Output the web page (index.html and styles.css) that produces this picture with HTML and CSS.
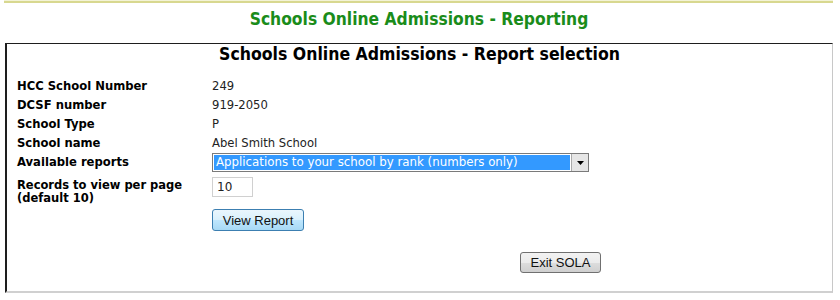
FILE: index.html
```html
<!DOCTYPE html>
<html lang="en">

<head>
    <meta charset="UTF-8">
    <link rel="stylesheet" href="styles.css">
</head>

<body>
    <div class="topline"></div>
    <h1 class="site-title">Schools Online Admissions - Reporting</h1>

    <div class="panel">
        <h2 class="panel-title">Schools Online Admissions - Report selection</h2>

        <form class="report-form">
            <div class="label">HCC School Number</div>
            <div class="value">249</div>

            <div class="label">DCSF number</div>
            <div class="value">919-2050</div>

            <div class="label">School Type</div>
            <div class="value">P</div>

            <div class="label">School name</div>
            <div class="value">Abel Smith School</div>

            <div class="label">Available reports</div>
            <div class="value">
                <div class="select">
                    <span class="select-text">Applications to your school by rank (numbers only)</span>
                    <span class="select-arrow">
                        <svg width="7" height="4" viewBox="0 0 7 4"><path d="M0 0h7L3.5 4z" fill="#000"/></svg>
                    </span>
                </div>
            </div>

            <div class="label tall">Records to view per page<br>(default 10)</div>
            <div class="value"><input class="per-page" type="text" value="10"></div>

            <div class="label"></div>
            <div class="value"><button type="button" class="btn btn-default">View Report</button></div>
        </form>

        <div class="exit-row">
            <button type="button" class="btn">Exit SOLA</button>
        </div>
    </div>
</body>

</html>
```

FILE: styles.css
```css
html {
    background-color: #fff;
}

body {
    margin: 0;
    padding: 0 7px 0 5px;
    font-family: "DejaVu Sans", Verdana, sans-serif;
    color: #000;
}

.topline {
    height: 2px;
    margin: 0 0 0 -1px;
    background-color: #d8d890;
    border-top: 1px solid #f3f3d6;
}

.site-title {
    margin: 6px 0 0;
    height: 34px;
    text-align: center;
    font-family: "DejaVu Sans Condensed", "DejaVu Sans", sans-serif;
    font-size: 17.3px;
    font-weight: bold;
    color: #1a8c1a;
}

.panel {
    height: 247px;
    border-top: 1px solid #1e1e1e;
    border-left: 2px solid #1e1e1e;
    border-right: 1px solid #c8c8c8;
    border-bottom: 2px solid #d0d0d0;
}

.panel-title {
    margin: 0;
    text-align: center;
    font-family: "DejaVu Sans Condensed", "DejaVu Sans", sans-serif;
    font-size: 17.5px;
    font-weight: bold;
    line-height: 20px;
}

.report-form {
    margin: 13px 0 0 10px;
    display: grid;
    grid-template-columns: 195px 1fr;
    font-size: 11.6px;
    line-height: 19px;
}

.label {
    font-weight: bold;
}

.label.tall {
    font-size: 11.5px;
    line-height: 13px;
    padding-top: 7px;
}

.value {
    color: #222;
}

.select {
    display: flex;
    align-items: center;
    width: 377px;
    height: 19px;
    border: 1px solid #7a7a7a;
    background-color: #fff;
    box-sizing: border-box;
}

.select-text {
    flex: 1;
    margin: 1px;
    height: 15px;
    line-height: 15px;
    padding-left: 2px;
    background-color: #3399ff;
    color: #fff;
    font-size: 11.8px;
}

.select-arrow {
    width: 16px;
    height: 17px;
    display: flex;
    align-items: center;
    justify-content: center;
    background-color: #e6e6e6;
    border-left: 1px solid #aaa;
}

.per-page {
    width: 41px;
    height: 20px;
    box-sizing: border-box;
    margin-top: 5px;
    border: 1px solid #d0d0d0;
    padding: 0 4px;
    font-family: "DejaVu Sans", sans-serif;
    font-size: 12px;
    color: #222;
}

.btn {
    font-family: "Liberation Sans", Arial, sans-serif;
    font-size: 13px;
    color: #111;
    height: 21px;
    padding: 0 7px;
    border: 1px solid #707070;
    border-radius: 3px;
    background: linear-gradient(#f2f2f2 0%, #ebebeb 50%, #dddddd 51%, #cfcfcf 100%);
}

.btn-default {
    margin-top: 4px;
    width: 92px;
    height: 22px;
    border-color: #3c7fb1;
    background: linear-gradient(#eaf6fd 0%, #d9f0fc 50%, #bee6fd 51%, #a7d9f5 100%);
}

.exit-row {
    margin-top: 21px;
    padding-left: 513px;
}

.exit-row .btn {
    width: 81px;
}
```
